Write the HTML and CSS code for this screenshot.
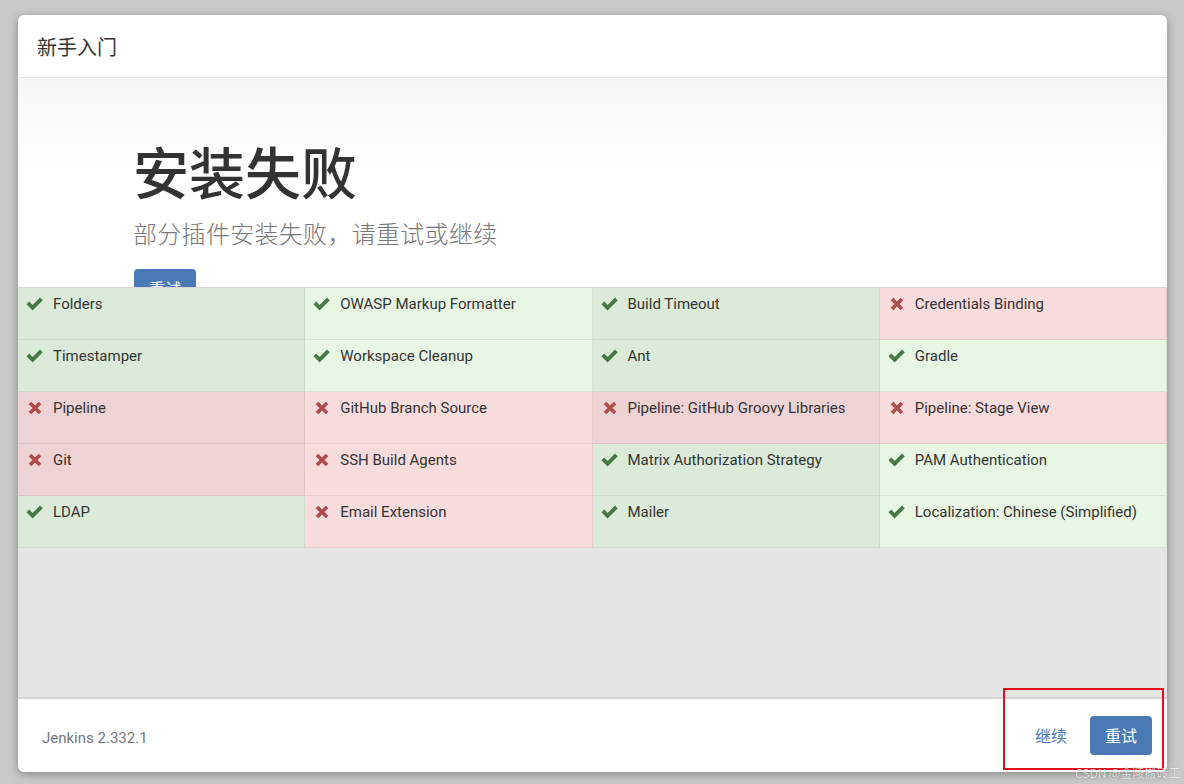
FILE: index.html
```html
<!DOCTYPE html>
<html lang="zh">
<head>
<meta charset="utf-8">
<title>新手入门</title>
<link rel="stylesheet" href="styles.css">
</head>
<body>
<div class="modal">
  <div class="modal-header">新手入门</div>
  <div class="modal-body">
    <div class="hero">
      <h1 class="title">安装失败</h1>
      <p class="subtitle">部分插件安装失败，请重试或继续</p>
      <button class="btn hero-btn">重试</button>
    </div>
    <div class="grid">
      <div class="cell ok odd"><svg class="ic" viewBox="0 0 18 14"><path d="M0.5 7.2L3.2 4.5L6.6 7.9L14 0.5L16.8 3.2L6.6 13.4Z"/></svg><span>Folders</span></div>
      <div class="cell ok"><svg class="ic" viewBox="0 0 18 14"><path d="M0.5 7.2L3.2 4.5L6.6 7.9L14 0.5L16.8 3.2L6.6 13.4Z"/></svg><span>OWASP Markup Formatter</span></div>
      <div class="cell ok odd"><svg class="ic" viewBox="0 0 18 14"><path d="M0.5 7.2L3.2 4.5L6.6 7.9L14 0.5L16.8 3.2L6.6 13.4Z"/></svg><span>Build Timeout</span></div>
      <div class="cell fail"><svg class="ix" viewBox="0 0 14 14"><path d="M2 2L12 12M12 2L2 12"/></svg><span>Credentials Binding</span></div>

      <div class="cell ok odd"><svg class="ic" viewBox="0 0 18 14"><path d="M0.5 7.2L3.2 4.5L6.6 7.9L14 0.5L16.8 3.2L6.6 13.4Z"/></svg><span>Timestamper</span></div>
      <div class="cell ok"><svg class="ic" viewBox="0 0 18 14"><path d="M0.5 7.2L3.2 4.5L6.6 7.9L14 0.5L16.8 3.2L6.6 13.4Z"/></svg><span>Workspace Cleanup</span></div>
      <div class="cell ok odd"><svg class="ic" viewBox="0 0 18 14"><path d="M0.5 7.2L3.2 4.5L6.6 7.9L14 0.5L16.8 3.2L6.6 13.4Z"/></svg><span>Ant</span></div>
      <div class="cell ok"><svg class="ic" viewBox="0 0 18 14"><path d="M0.5 7.2L3.2 4.5L6.6 7.9L14 0.5L16.8 3.2L6.6 13.4Z"/></svg><span>Gradle</span></div>

      <div class="cell fail odd"><svg class="ix" viewBox="0 0 14 14"><path d="M2 2L12 12M12 2L2 12"/></svg><span>Pipeline</span></div>
      <div class="cell fail"><svg class="ix" viewBox="0 0 14 14"><path d="M2 2L12 12M12 2L2 12"/></svg><span>GitHub Branch Source</span></div>
      <div class="cell fail odd"><svg class="ix" viewBox="0 0 14 14"><path d="M2 2L12 12M12 2L2 12"/></svg><span>Pipeline: GitHub Groovy Libraries</span></div>
      <div class="cell fail"><svg class="ix" viewBox="0 0 14 14"><path d="M2 2L12 12M12 2L2 12"/></svg><span>Pipeline: Stage View</span></div>

      <div class="cell fail odd"><svg class="ix" viewBox="0 0 14 14"><path d="M2 2L12 12M12 2L2 12"/></svg><span>Git</span></div>
      <div class="cell fail"><svg class="ix" viewBox="0 0 14 14"><path d="M2 2L12 12M12 2L2 12"/></svg><span>SSH Build Agents</span></div>
      <div class="cell ok odd"><svg class="ic" viewBox="0 0 18 14"><path d="M0.5 7.2L3.2 4.5L6.6 7.9L14 0.5L16.8 3.2L6.6 13.4Z"/></svg><span>Matrix Authorization Strategy</span></div>
      <div class="cell ok"><svg class="ic" viewBox="0 0 18 14"><path d="M0.5 7.2L3.2 4.5L6.6 7.9L14 0.5L16.8 3.2L6.6 13.4Z"/></svg><span>PAM Authentication</span></div>

      <div class="cell ok odd"><svg class="ic" viewBox="0 0 18 14"><path d="M0.5 7.2L3.2 4.5L6.6 7.9L14 0.5L16.8 3.2L6.6 13.4Z"/></svg><span>LDAP</span></div>
      <div class="cell fail"><svg class="ix" viewBox="0 0 14 14"><path d="M2 2L12 12M12 2L2 12"/></svg><span>Email Extension</span></div>
      <div class="cell ok odd"><svg class="ic" viewBox="0 0 18 14"><path d="M0.5 7.2L3.2 4.5L6.6 7.9L14 0.5L16.8 3.2L6.6 13.4Z"/></svg><span>Mailer</span></div>
      <div class="cell ok"><svg class="ic" viewBox="0 0 18 14"><path d="M0.5 7.2L3.2 4.5L6.6 7.9L14 0.5L16.8 3.2L6.6 13.4Z"/></svg><span>Localization: Chinese (Simplified)</span></div>
    </div>
  </div>
  <div class="modal-footer">
    <span class="version">Jenkins 2.332.1</span>
    <div class="actions">
      <a class="link">继续</a>
      <button class="btn">重试</button>
    </div>
  </div>
</div>
<div class="annot"></div>
<div class="watermark">CSDN @金陵搬砖工</div>
</body>
</html>
```

FILE: styles.css
```css
* { box-sizing: border-box; }
html, body { margin: 0; padding: 0; }
body {
  width: 1184px;
  height: 784px;
  overflow: hidden;
  background: #c9c9c9;
  font-family: Roboto, "Noto Sans CJK SC", sans-serif;
  color: #333;
  padding: 15px 17px 0 18px;
  position: relative;
}
.modal {
  width: 1149px;
  height: 757px;
  background: #fff;
  border-radius: 6px;
  box-shadow: 0 2px 8px rgba(0,0,0,0.35);
  display: flex;
  flex-direction: column;
  overflow: hidden;
}
.modal-header {
  height: 63px;
  flex: none;
  display: flex;
  align-items: center;
  padding-left: 19px;
  font-size: 20px;
  font-family: "Noto Sans CJK SC", sans-serif;
  color: #333;
  border-bottom: 1px solid #e3e3e3;
}
.modal-body {
  flex: 1;
  background: #e5e5e5;
  display: flex;
  flex-direction: column;
}
.hero {
  height: 209px;
  flex: none;
  overflow: hidden;
  background: linear-gradient(#f6f6f6 0px, #fdfdfd 70px, #fff 110px);
  padding: 61px 0 0 115px;
  font-family: "Noto Sans CJK SC", sans-serif;
}
.title {
  margin: 0;
  font-size: 56px;
  line-height: 62px;
  font-weight: 500;
  color: #333;
}
.subtitle {
  margin: 15px 0 0;
  font-size: 24px;
  line-height: 34px;
  font-weight: 300;
  letter-spacing: 0.3px;
  color: #777;
}
.btn {
  border: none;
  background: #4a7ab5;
  color: #fff;
  font-family: "Noto Sans CJK SC", sans-serif;
  font-size: 16px;
  border-radius: 4px;
  padding: 0;
}
.hero-btn {
  margin-top: 19px;
  margin-left: 1px;
  width: 62px;
  height: 38px;
  border-radius: 4px 4px 0 0;
}
.grid {
  display: grid;
  grid-template-columns: repeat(4, 1fr);
  grid-auto-rows: 52px;
  border-top: 1px solid #d8d8d8;
}
.cell {
  display: flex;
  align-items: flex-start;
  padding: 6px 0 0 8px;
  font-size: 15px;
  line-height: 20px;
  color: #333;
  border-right: 1px solid rgba(0,0,0,0.07);
  border-bottom: 1px solid rgba(0,0,0,0.07);
}
.cell span { margin-left: 9px; }
.cell.ok { background: #e8f6e4; }
.cell.ok.odd { background: #dcebd9; }
.cell.fail { background: #fadcdc; }
.cell.fail.odd { background: #efd2d3; }
.ic {
  width: 18px;
  height: 14px;
  margin-top: 3px;
  fill: #467a45;
}
.ix {
  width: 14px;
  height: 14px;
  margin: 3px 2px 0 2px;
  fill: none;
  stroke: #b04b49;
  stroke-width: 3.6;
}
.modal-footer {
  height: 75px;
  flex: none;
  border-top: 2px solid #d4d4d4;
  display: flex;
  align-items: center;
  justify-content: space-between;
  padding: 4px 15px 0 24px;
}
.version {
  font-size: 15px;
  color: #777;
}
.actions {
  display: flex;
  align-items: center;
  gap: 23px;
  margin-bottom: 5px;
}
.link {
  font-family: "Noto Sans CJK SC", sans-serif;
  font-size: 16px;
  color: #4a78b3;
}
.actions .btn {
  width: 62px;
  height: 39px;
}
.annot {
  position: absolute;
  left: 1003px;
  top: 688px;
  width: 161px;
  height: 82px;
  border: 2px solid #e3101c;
}
.watermark {
  position: absolute;
  left: 1075px;
  top: 764px;
  font-size: 12px;
  font-family: "Noto Sans CJK SC", sans-serif;
  color: rgba(255,255,255,0.75);
  text-shadow: 0 0 1px rgba(0,0,0,0.3);
  white-space: nowrap;
}
```
